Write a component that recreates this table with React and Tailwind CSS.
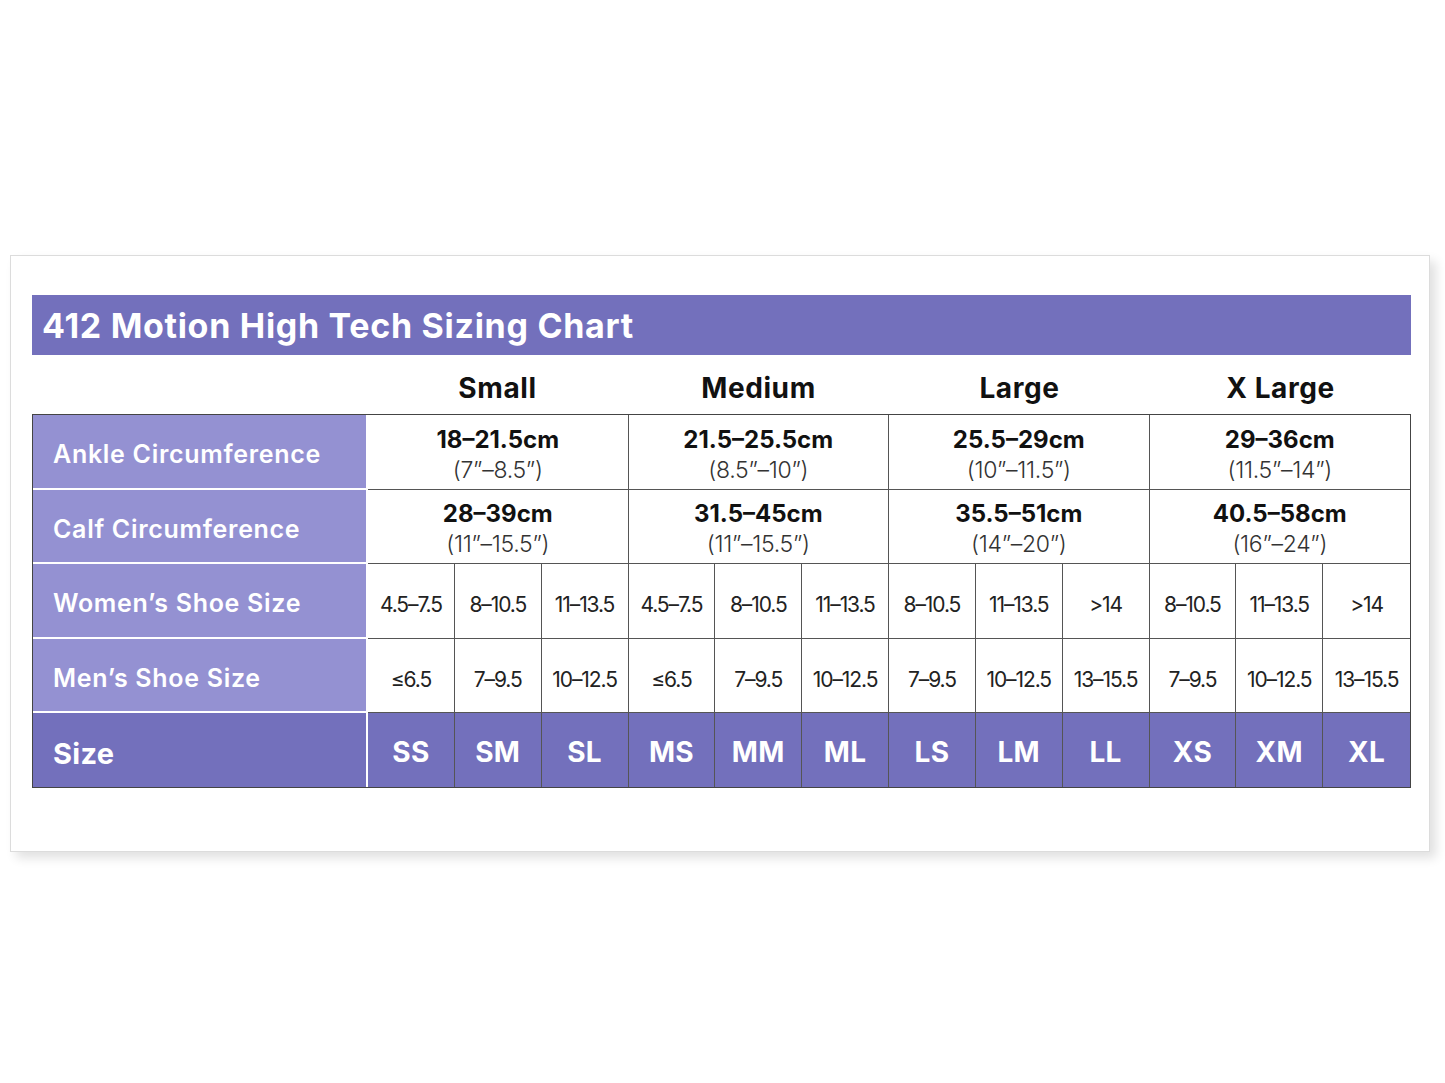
const font = { fontFamily: "Inter, 'Open Sans', sans-serif" };

const groups = [
  { name: "Small", ankle: ["18–21.5cm", "(7”–8.5”)"], calf: ["28–39cm", "(11”–15.5”)"] },
  { name: "Medium", ankle: ["21.5–25.5cm", "(8.5”–10”)"], calf: ["31.5–45cm", "(11”–15.5”)"] },
  { name: "Large", ankle: ["25.5–29cm", "(10”–11.5”)"], calf: ["35.5–51cm", "(14”–20”)"] },
  { name: "X Large", ankle: ["29–36cm", "(11.5”–14”)"], calf: ["40.5–58cm", "(16”–24”)"] },
];

const women = ["4.5–7.5", "8–10.5", "11–13.5", "4.5–7.5", "8–10.5", "11–13.5", "8–10.5", "11–13.5", ">14", "8–10.5", "11–13.5", ">14"];
const men = ["≤6.5", "7–9.5", "10–12.5", "≤6.5", "7–9.5", "10–12.5", "7–9.5", "10–12.5", "13–15.5", "7–9.5", "10–12.5", "13–15.5"];
const sizes = ["SS", "SM", "SL", "MS", "MM", "ML", "LS", "LM", "LL", "XS", "XM", "XL"];

function Label({ children, last }) {
  return (
    <div
      className={`w-[335px] shrink-0 flex items-center pl-5 text-white border-r-2 border-white ${
        last
          ? "bg-[#7370bc] font-bold text-[29px] tracking-[0.3px] pt-[7px]"
          : "bg-[#9491d2] font-semibold text-[25px] tracking-[0.7px] border-b-2 pt-[7px]"
      }`}
    >
      {children}
    </div>
  );
}

function RangeRow({ field, h }) {
  return (
    <div className={`flex ${h}`}>
      <Label>{field === "ankle" ? "Ankle Circumference" : "Calf Circumference"}</Label>
      <div className="flex-1 grid grid-cols-4">
        {groups.map((g, i) => (
          <div
            key={g.name}
            className={`flex flex-col items-center justify-center pt-[5px] border-b border-[#555] leading-[30px] ${i < 3 ? "border-r" : ""}`}
          >
            <span className="text-[24px] font-bold text-[#111]">{g[field][0]}</span>
            <span className="text-[23px] font-light text-[#333] tracking-[-0.3px]">{g[field][1]}</span>
          </div>
        ))}
      </div>
    </div>
  );
}

function CellRow({ label, values, last, h }) {
  return (
    <div className={`flex ${h}`}>
      <Label last={last}>{label}</Label>
      <div className={`flex-1 grid grid-cols-12 ${last ? "bg-[#7370bc]" : ""}`}>
        {values.map((v, i) => (
          <div
            key={i}
            className={`flex items-center justify-center border-[#555] ${i < 11 ? "border-r" : ""} ${
              last ? "text-white font-bold text-[28px] tracking-[0.3px] pt-[4px]" : "border-b pt-[8px] text-[#222] text-[21px] tracking-[-1.1px]"
            }`}
          >
            {v}
          </div>
        ))}
      </div>
    </div>
  );
}

export default function App() {
  return (
    <div className="w-[1445px] h-[1083px] bg-white pt-[255px] pl-[10px]" style={font}>
      <div className="w-[1420px] h-[597px] bg-white border border-[#dcdcdc] shadow-[6px_6px_10px_rgba(0,0,0,0.12)] pt-[39px] pl-[21px]">
        <div className="w-[1379px] h-[60px] bg-[#7370bc] flex items-center pl-[10px]">
          <h1 className="text-white font-bold text-[34px] tracking-[0.7px]">412 Motion High Tech Sizing Chart</h1>
        </div>
        <div className="w-[1379px] h-[59px] flex pl-[335px]">
          {groups.map((g) => (
            <div key={g.name} className="flex-1 flex items-center justify-center text-[28px] font-bold tracking-[0.6px] text-[#111] pt-[6px]">
              {g.name}
            </div>
          ))}
        </div>
        <div className="w-[1379px] border border-[#444]">
          <RangeRow field="ankle" h="h-[75px]" />
          <RangeRow field="calf" h="h-[74px]" />
          <CellRow label="Women’s Shoe Size" values={women} h="h-[75px]" />
          <CellRow label="Men’s Shoe Size" values={men} h="h-[74px]" />
          <CellRow label="Size" values={sizes} last h="h-[74px]" />
        </div>
      </div>
    </div>
  );
}
